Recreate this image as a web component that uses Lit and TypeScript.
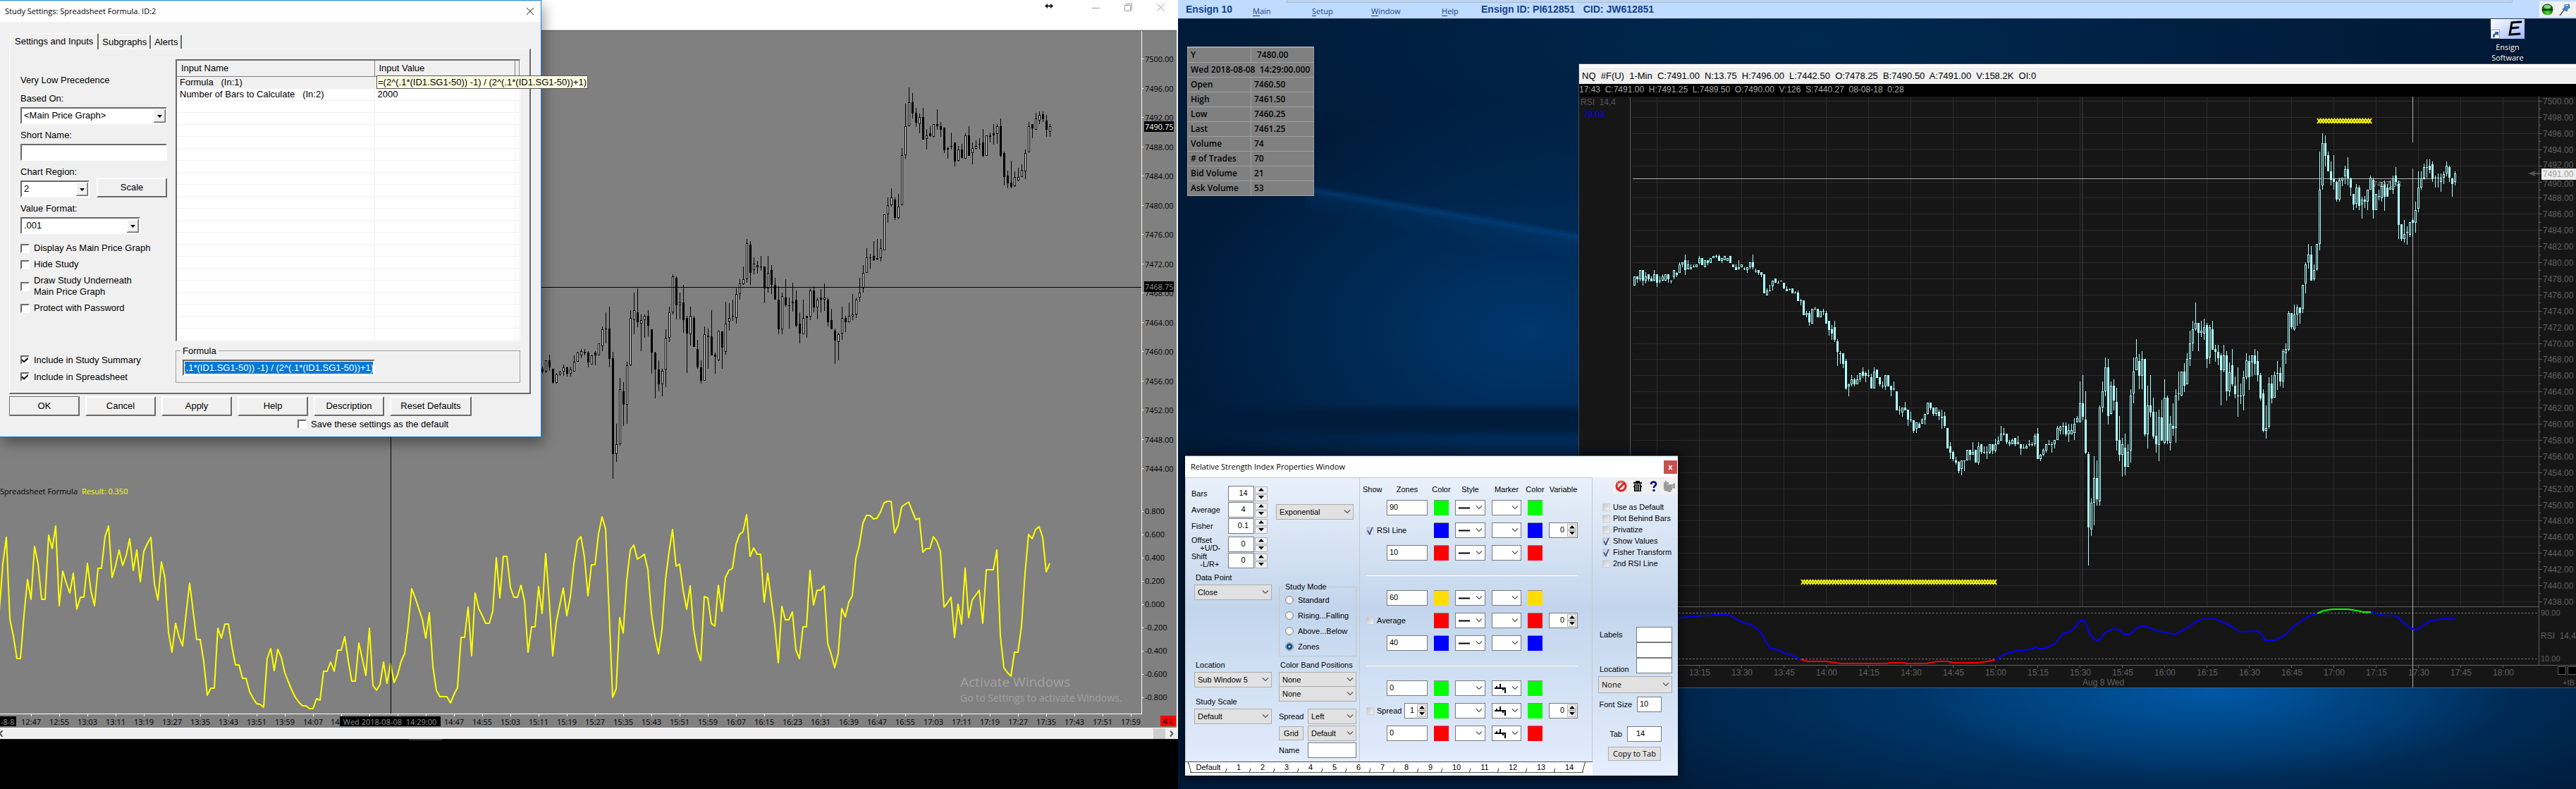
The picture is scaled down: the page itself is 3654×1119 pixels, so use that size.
import { LitElement, html, svg, css, nothing } from "lit";
import { customElement } from "lit/decorators.js";

/* ------------------------------------------------------------------ */
/* Data                                                                */
/* ------------------------------------------------------------------ */

/** One bar: wick top, body top, body bottom, wick bottom, hollow. */
interface Bar { x: number; h: number; t: number; b: number; l: number; up: boolean; }

/** Reads "h t b l w|b" records; positions them `step` apart, the last at `lastX`. */
function bars(src: string, lastX: number, step: number, y: (v: number) => number): Bar[] {
  const rows = src.trim().split(/\s*;\s*/).filter(Boolean);
  return rows.map((r, i) => {
    const p = r.split(",");
    const [h, t, b, l] = p.slice(0, 4).map((v) => Math.round(y(Number(v))));
    return { x: lastX - step * (rows.length - 1 - i), h, t, b: Math.max(b, t + 1), l: Math.max(l, b, t + 1), up: p[4] === "w" };
  });
}

const SC_BARS = bars(`
1165,1172,1180,1187,b;1145,1145,1180,1185,w;1127,1145,1168,1178,b;1172,1172,1216,1218,b;1185,1189,1216,1218,w;1178,1180,1190,1195,w;
1157,1168,1180,1195,w;1165,1168,1187,1197,b;1165,1173,1188,1196,w;1128,1150,1180,1180,w;1118,1121,1150,1150,w;1109,1116,1128,1138,w;
1109,1117,1122,1130,b;1115,1120,1151,1166,b;1127,1128,1157,1158,w;1115,1120,1130,1160,b;1092,1092,1128,1128,w;1038,1045,1099,1115,w;
992,1044,1047,1090,b;974,1044,1140,1166,b;1117,1138,1442,1520,b;1346,1412,1442,1468,w;1201,1237,1412,1415,w;1215,1243,1285,1353,b;
1150,1161,1285,1346,w;986,1010,1161,1163,w;930,986,1016,1062,w;916,993,1024,1040,b;999,1016,1029,1116,w;999,1004,1016,1073,w;
986,1004,1035,1068,b;1045,1045,1121,1188,b;1117,1121,1173,1265,b;1145,1173,1220,1243,b;1172,1178,1220,1258,w;1046,1074,1173,1230,w;
975,993,1074,1087,w;871,877,993,998,w;877,883,971,1014,b;930,960,971,1014,w;905,960,1016,1057,b;1004,1010,1060,1184,b;
974,1004,1062,1097,w;1003,1010,1103,1103,b;1080,1109,1168,1172,b;1145,1168,1209,1218,b;1038,1062,1209,1209,w;1043,1066,1070,1172,b;
986,1069,1130,1130,b;1121,1127,1133,1188,b;1051,1051,1145,1146,w;1052,1052,1104,1172,b;958,1028,1117,1127,w;963,1010,1022,1050,w;
952,1003,1006,1020,w;916,934,1010,1028,w;887,900,934,951,w;847,887,902,905,w;759,773,887,899,w;766,777,866,905,b;
818,837,859,871,w;829,842,848,870,b;813,846,850,860,b;847,847,917,963,b;813,866,916,930,w;842,858,905,935,b;
883,905,952,953,b;910,952,1046,1062,b;930,941,1046,1062,w;887,945,971,974,b;945,969,972,1044,b;899,959,964,990,w;
923,952,1035,1039,b;993,1028,1060,1091,b;952,1010,1062,1062,w;1004,1004,1011,1073,b;916,923,1005,1016,w;910,923,976,993,b;
945,952,976,1015,w;918,945,953,993,b;900,946,952,988,w;945,952,1023,1038,b;982,1016,1046,1046,b;1044,1051,1081,1156,b;
1057,1062,1087,1145,w;974,1010,1060,1080,w;1003,1010,1023,1056,b;960,1004,1023,1023,w;935,1000,1005,1016,w;945,952,1000,1010,w;
883,930,946,958,w;842,866,916,930,w;788,818,866,866,w;806,817,820,853,b;766,813,827,829,b;759,819,825,826,w;
759,789,819,830,w;680,680,796,796,w;627,651,680,708,w;599,627,651,656,w;627,633,692,700,b;616,656,692,697,w;
471,493,651,651,w;329,401,493,504,w;278,325,402,402,w;296,325,360,376,b;343,358,390,404,b;360,372,395,423,w;
343,372,443,444,b;410,430,442,474,w;401,423,432,435,b;395,395,435,436,w;347,394,402,413,b;388,402,413,435,b;
405,405,477,487,b;465,471,476,503,w;422,464,467,476,b;452,452,513,528,b;464,476,511,512,w;457,475,502,505,b;
423,430,504,504,w;401,430,494,494,b;452,471,487,521,w;446,464,472,474,w;440,456,460,475,b;411,452,495,500,b;
430,430,494,494,w;422,430,434,452,b;395,423,430,460,b;394,402,425,458,w;377,401,495,500,b;482,486,563,590,b;
541,557,582,598,b;511,580,594,598,b;545,563,592,594,w;534,562,574,575,w;521,540,562,563,w;476,487,545,569,w;
388,402,483,483,w;394,395,407,440,b;359,377,412,413,w;354,366,383,394,w;354,364,378,388,b;365,383,413,435,b;394,402,419,435,w`,
  1489, 5, (v) => v / 2.24);

const OSC: number[] = [
  800, 600, 485, 835, 905, 1002, 1002, 820, 667, 750, 526, 600, 750, 750, 478, 535, 438, 778, 631, 682, 724, 640, 793, 741, 741,
  596, 715, 778, 618, 618, 482, 438, 658, 605, 541, 605, 565, 493, 628, 541, 676, 546, 512, 485, 685, 754, 592, 660, 890, 976,
  853, 908, 948, 810, 682, 800, 920, 920, 1015, 1159, 1128, 1128, 874, 915, 855, 855, 950, 1028, 1028, 1086, 1086, 1143, 1170,
  1193, 1198, 1210, 1003, 959, 1054, 964, 995, 1062, 1100, 1138, 1168, 1187, 1202, 1204, 1216, 1216, 1172, 1179, 1056, 1056,
  1018, 1056, 966, 966, 910, 1010, 1099, 1099, 937, 1005, 1075, 874, 1117, 1138, 1112, 1018, 1107, 1024, 1104, 1072, 1015, 980,
  860, 704, 745, 790, 835, 915, 808, 1035, 1138, 1164, 1164, 1164, 1191, 1156, 1124, 912, 912, 784, 989, 724, 790, 820, 852,
  852, 800, 574, 745, 568, 568, 700, 741, 741, 691, 755, 976, 867, 867, 697, 810, 556, 750, 991, 850, 775, 703, 818, 740, 600,
  500, 482, 570, 736, 603, 603, 470, 398, 450, 800, 1168, 1130, 828, 895, 670, 540, 520, 578, 569, 557, 625, 810, 910, 982, 880,
  665, 550, 454, 610, 599, 710, 793, 694, 880, 965, 1012, 737, 745, 853, 864, 691, 802, 658, 628, 617, 515, 475, 463, 391, 568,
  532, 558, 558, 763, 640, 750, 860, 1021, 781, 837, 837, 805, 967, 1003, 867, 867, 628, 775, 711, 711, 694, 935, 985, 1042,
  980, 788, 826, 762, 736, 577, 520, 425, 393, 393, 408, 405, 378, 339, 332, 332, 469, 435, 357, 345, 335, 375, 411, 404, 550,
  535, 535, 484, 503, 546, 784, 765, 740, 913, 770, 856, 617, 829, 753, 733, 712, 853, 625, 624, 624, 539, 905, 1040, 1062, 1078,
  975, 975, 865, 640, 475, 493, 454, 440, 487, 634, 598];

const NQ_MORNING = bars(`
815,815,848,848,w;815,816,826,838,b;793,793,825,834,w;793,793,832,850,b;800,816,832,841,w;808,808,825,833,b;814,824,833,833,b;
792,808,832,833,w;808,808,840,855,b;815,832,834,841,b;808,816,832,833,w;808,808,832,833,w;808,808,825,839,b;832,832,833,841,b;
793,793,817,825,w;800,801,809,817,b;763,772,801,801,w;763,763,772,780,w;735,755,793,810,b;755,772,788,788,w;772,780,788,788,w;
770,779,781,781,b;772,772,780,780,w;740,748,765,772,w;747,747,773,773,b;755,755,780,780,w;755,755,766,773,b;747,747,765,765,w;
740,740,748,748,w;733,740,742,748,b;735,740,757,757,b;747,748,757,765,w;740,740,755,756,w;747,747,757,757,w;740,740,766,766,b;
772,772,780,780,b;770,780,793,793,b;755,780,788,788,w;770,772,780,780,w;780,787,789,793,b;780,780,793,801,w;763,763,780,788,w;
735,763,781,788,b;787,794,796,801,b;793,793,801,809,b;800,800,809,817,b;808,808,878,878,b;860,868,885,886,w;847,868,870,870,b;
831,832,853,868,w;824,824,840,840,b;832,840,841,841,b;832,832,834,834,b;840,840,860,861,b;853,862,870,870,b;860,861,863,868,b;
860,860,878,878,b;870,876,878,878,b;868,875,906,907,b;900,905,907,922,b;905,905,959,959,b;944,952,959,967,w;944,951,984,998,b;
936,936,990,990,w;928,936,938,938,b;936,936,967,967,b;944,944,967,967,w;936,943,945,960,b;944,951,990,990,b;980,980,1014,1035,b;
996,1012,1027,1051,b;981,1004,1051,1059,b;1048,1056,1095,1146,b;1092,1100,1103,1140,b;1100,1101,1138,1155,b;1122,1130,1230,1237,b;
1213,1214,1222,1260,w;1182,1198,1214,1222,w;1192,1198,1214,1222,b;1182,1198,1214,1215,w;1173,1174,1198,1208,w;1152,1168,1183,1192,b;
1168,1174,1183,1208,b;1160,1181,1183,1190,b;1175,1190,1230,1230,b;1153,1168,1230,1230,w;1160,1160,1191,1191,b;1190,1190,1214,1222,b;
1205,1220,1222,1230,b;1182,1182,1222,1237,w;1182,1182,1222,1222,b;1220,1220,1236,1260,b;1205,1230,1232,1238,b;1242,1242,1311,1311,b;
1295,1310,1312,1328,b;1302,1302,1319,1334,w;1280,1302,1311,1311,b;1310,1310,1347,1370,b;1318,1346,1348,1355,b;1348,1348,1388,1396,b;
1355,1355,1380,1396,w;1355,1362,1378,1378,b;1340,1347,1362,1362,w;1326,1326,1347,1363,w;1282,1282,1326,1327,w;1282,1282,1304,1312,b;
1302,1302,1326,1333,b;1302,1302,1326,1333,w;1310,1318,1333,1348,b;1310,1334,1341,1380,b;1318,1333,1370,1378,b;1378,1378,1452,1452,b;
1430,1445,1468,1491,b;1460,1467,1491,1500,b;1485,1497,1505,1512,b;1499,1503,1536,1545,b;1498,1498,1528,1552,w;1498,1498,1500,1537,b;
1458,1459,1498,1498,w;1458,1459,1476,1498,b;1430,1466,1476,1476,w;1458,1459,1504,1504,b;1430,1445,1504,1512,w;1437,1438,1467,1475,b;
1445,1467,1469,1475,b;1445,1467,1469,1491,b;1437,1438,1468,1475,w;1437,1438,1460,1475,b;1415,1438,1460,1468,w;1408,1423,1438,1438,w;
1370,1398,1423,1423,w;1378,1397,1399,1407,b;1398,1398,1430,1437,b;1422,1430,1438,1445,w;1415,1422,1438,1438,w;1413,1413,1438,1445,b;
1407,1430,1438,1438,w;1437,1438,1452,1476,b;1437,1450,1452,1452,b;1437,1445,1452,1452,w;1422,1438,1440,1445,b;1430,1438,1440,1445,b;
1398,1406,1438,1445,w;1378,1398,1491,1491,b;1475,1476,1491,1499,w;1452,1458,1476,1482,w;1437,1438,1460,1468,w;1422,1436,1438,1438,b;
1430,1438,1440,1468,b;1422,1422,1438,1452,w;1370,1377,1422,1422,w;1370,1371,1387,1400,w;1355,1370,1371,1400,b;1357,1370,1401,1408,b;
1362,1386,1400,1430,w;1362,1386,1400,1400,w;1340,1362,1395,1422,w;1333,1340,1355,1355,w;1205,1286,1355,1355,w;1182,1286,1334,1348,b;
1242,1346,1468,1475,b`, 2958, 4, (v) => 80 + v * 0.3827);

const NQ_SESSION = bars(`
641,644,748,802,b;707,713,751,760,w;647,678,713,745,w;653,678,708,717,b;575,578,711,717,w;541,555,578,585,w;507,521,555,562,w;
509,521,590,602,b;541,547,587,588,w;538,547,568,582,b;550,570,625,639,b;590,624,645,654,b;621,630,645,676,w;615,635,662,674,b;
630,641,662,662,w;552,561,639,656,w;507,527,558,572,w;481,507,525,525,w;502,512,533,552,b;498,509,533,552,w;509,509,616,619,b;
547,575,616,636,w;532,575,585,591,b;564,584,619,622,b;584,618,630,642,b;581,592,631,654,w;567,592,625,625,b;538,564,628,630,w;
561,564,625,630,b;590,601,628,639,w;572,604,608,618,b;552,561,607,628,w;527,558,559,568,b;527,527,561,562,w;515,527,547,556,b;
501,509,545,545,w;469,487,509,519,w;455,467,487,498,w;429,458,467,469,w;458,458,472,498,b;455,469,472,478,w;452,464,473,482,w;
458,461,509,522,b;461,464,507,516,w;455,467,496,496,b;489,495,499,513,b;489,499,508,518,b;501,504,525,575,b;489,504,525,528,w;
498,504,555,568,b;514,528,555,562,w;495,518,545,548,b;534,547,559,565,b;521,561,562,591,b;544,561,562,573,b;526,535,561,582,w;
501,511,535,538,w;504,512,535,553,b;504,504,514,534,w;495,504,516,532,b;498,512,532,541,b;529,532,565,568,b;552,558,611,613,b;
575,607,611,622,w;535,544,605,608,w;532,544,565,572,b;527,532,564,564,w;512,529,530,553,w;521,529,541,548,b;495,498,541,550,w;
487,495,501,516,w;441,444,496,498,w;444,444,464,467,b;432,446,467,469,w;432,436,446,462,w;436,436,444,459,b;404,404,438,444,w;
372,375,402,416,w;346,361,372,381,w;349,361,398,398,b;375,383,396,398,w;346,346,382,384,w;215,269,346,355,w;189,203,263,269,w;
192,203,221,236,b;215,220,243,243,b;229,243,255,263,b;220,254,258,269,b;256,258,283,286,b;252,255,283,286,w;252,252,256,264,w;
235,240,250,261,w;223,240,253,263,b;252,253,266,278,b;275,275,290,298,b;261,266,289,295,w;263,266,292,298,b;279,283,290,310,w;
278,283,286,295,b;269,269,286,298,w;249,252,269,269,w;252,255,298,310,b;275,275,298,298,w;269,278,279,284,b;258,264,281,286,w;
256,262,279,299,b;261,266,279,279,b;256,266,269,269,w;249,253,269,275,w;237,249,258,263,b;256,261,319,339,b;318,318,339,342,b;
312,332,339,344,w;321,329,330,347,b;315,315,333,336,w;309,312,316,336,b;286,298,316,330,w;243,266,296,301,w;243,253,266,269,w;
232,237,253,255,w;226,237,238,252,b;226,235,241,246,b;229,233,253,258,b;249,252,253,266,b;246,252,253,266,b;246,252,258,272,w;
243,247,252,261,w;229,235,246,250,w;235,237,252,258,b;252,253,261,279,b;243,246,258,263,w`, 3482, 4, (v) => v);

const rsiA = (s: string) => s.split(" ").map((p) => { const [x, y] = p.split(",").map(Number); return `${Math.round(2370 + x * 0.4082)},${Math.round(540 + y / 3)}`; }).join(" ");
const rsiB = (s: string) => s.split(" ").map((p) => { const [x, y] = p.split(",").map(Number); return `${Math.round(2980 + x * 0.4298)},${Math.round(540 + y * 0.3693)}`; }).join(" ");

const RSI_LINES: [string, string][] = [
  ["#00f", rsiA("0,1025 24,1016 35,1009 60,1005 90,1002 100,998 140,998 150,996 200,996 215,1005 235,1021 258,1033 275,1034 295,1050 314,1072 330,1110 345,1136 375,1145 400,1160 425,1171 450,1184")],
  ["#f00", rsiA("450,1184 475,1193 540,1194 590,1202 750,1202 762,1199 810,1199 820,1202 890,1202 925,1193 960,1193 985,1199 1070,1199 1100,1194 1128,1187")],
  ["#00f", rsiA("1128,1187 1158,1165 1200,1149 1230,1145 1258,1139 1266,1131 1276,1139 1298,1139 1333,1121 1362,1076 1385,1067 1408,1048 1422,1021 1432,1020 1442,1033 1451,1065 1462,1090 1480,1106 1490,1100 1510,1070 1535,1056 1545,1056 1568,1069") + " " +
    rsiB("75,971 88,975 98,972 120,948 135,942 160,947 185,961 235,972 250,971 285,951 320,921 340,915 378,915 400,926 430,943 458,965 515,961 530,972 543,996 575,996 605,980 640,940 690,902 714,894")],
  ["#0f0", rsiB("714,894 735,882 765,878 815,878 845,882 865,888 891,889")],
  ["#00f", rsiB("891,889 935,902 973,902 990,921 1015,946 1035,957 1045,955 1070,933 1090,921 1145,913 1150,915 1168,915")],
];

const rect = (x: number, y: number, w: number, h: number) => `M${x} ${y}h${w}v${h}h${-w}z`;
const wicks = (bs: Bar[]) => bs.map((b) => rect(b.x, b.h, 1, b.l - b.h)).join("");
const bodies = (bs: Bar[]) => bs.map((b) => rect(b.x - 1, b.t, 3, b.b - b.t)).join("");
const cores = (bs: Bar[]) => bs.filter((b) => b.up && b.b - b.t > 2).map((b) => rect(b.x, b.t + 1, 1, b.b - b.t - 2)).join("");
const range = (n: number) => Array.from({ length: n }, (_, i) => i);
const clock = (min: number) => `${Math.floor(min / 60)}:${String(min % 60).padStart(2, "0")}`;

/* ------------------------------------------------------------------ */
/* Shared styles                                                       */
/* ------------------------------------------------------------------ */

const base = css`
  * { box-sizing: border-box; }
  button, input, select { font: inherit; color: inherit; margin: 0; border-radius: 0; }
  button { padding: 0; }
  .sel { display: grid; align-items: center; }
  .sel > * { grid-area: 1 / 1; }
  .sel select { appearance: none; width: 100%; height: 100%; padding: 0; outline: none; }
  .sel svg { justify-self: end; pointer-events: none; }
`;

/* ------------------------------------------------------------------ */
/* Grey price chart with the oscillator                                */
/* ------------------------------------------------------------------ */

@customElement("spread-chart")
export class SpreadChart extends LitElement {
  static styles = css`
    :host { display: block; }
    svg { display: block; width: 100%; font: 11px "Open Sans", "Noto Sans", sans-serif; }
    .mid { text-anchor: middle; }
    .crisp { shape-rendering: crispEdges; }
    .big { font-size: 19px; }
    .small { font-size: 14px; }
  `;
  render() {
    return html`<svg viewBox="0 42 1671 990" role="img" aria-label="Price chart">
      <rect x="0" y="42" width="1671" height="990" fill="#808080" />
      <g class="crisp">
        <rect x="0" y="42" width="1671" height="1" fill="#d8d8d8" />
        <rect x="0" y="43" width="1669" height="1" fill="#5f5f5f" />
        <rect x="1669" y="42" width="2" height="990" fill="#f0f0f0" />
        <path d=${wicks(SC_BARS) + bodies(SC_BARS)} fill="#000" />
        <path d=${cores(SC_BARS)} fill="#fff" />
        <rect x="0" y="407" width="1619" height="1" fill="#000" />
        <rect x="1619" y="44" width="1" height="969" fill="#fff" />
        <rect x="0" y="1012" width="1620" height="1" fill="#fff" />
        ${range(15).map((i) => svg`<rect x="1620" y=${Math.round(83 + i * 41.5)} width="2" height="1" fill="#fff"/>`)}
        ${range(9).map((i) => svg`<rect x="1620" y=${725 + i * 33} width="2" height="1" fill="#fff"/>`)}
        ${range(40).map((i) => svg`<rect x=${44 + i * 40} y="1013" width="1" height="3" fill="#fff"/>`)}
      </g>
      <polyline fill="none" stroke="#ff0" stroke-width="2" stroke-linejoin="round"
        points=${OSC.map((v, i) => `${1489 - 5 * (OSC.length - 1 - i)},${Math.round(600 + v / 3)}`).join(" ")} />
      <rect class="crisp" x="554" y="600" width="1" height="412" fill="#000" />
      ${range(15).map((i) => svg`<text x="1624" y=${Math.round(88 + i * 41.5)}>${(7500 - i * 4).toFixed(2)}</text>`)}
      ${range(9).map((i) => svg`<text x="1624" y=${729 + i * 33}>${(0.8 - i * 0.2).toFixed(3).replace("-0.000", "0.000")}</text>`)}
      <rect x="1623" y="172" width="42" height="15" fill="#000" />
      <text x="1624" y="184" fill="#fff">7490.75</text>
      <rect x="1623" y="399" width="42" height="15" fill="#000" />
      <text x="1624" y="411" fill="#909090">7468.75</text>
      ${range(40).filter((i) => i < 11 || i > 14).map((i) => svg`<text class="mid" x=${44 + i * 40} y="1028">${clock(767 + i * 8)}</text>`)}
      <text x="469" y="1028">14</text>
      <rect x="0" y="1016" width="23" height="14" fill="#000" />
      <text x="1" y="1028" fill="#909090">-8-8</text>
      <rect x="482" y="1016" width="143" height="14" fill="#000" />
      <text class="mid" x="553" y="1028" fill="#909090">Wed 2018-08-08&#160; 14:29:00</text>
      <rect x="1646" y="1015" width="22" height="15" fill="#f00" />
      <text class="mid" x="1657" y="1027">4 L</text>
      <text x="0" y="701">Spreadsheet Formula</text>
      <text x="116" y="701" fill="#ff0">Result: 0.350</text>
      <text class="big" x="1362" y="974" fill="#a2a2a2">Activate Windows</text>
      <text class="small" x="1362" y="995" fill="#a2a2a2">Go to Settings to activate Windows.</text>
    </svg>`;
  }
}

/* ------------------------------------------------------------------ */
/* Study settings dialog                                               */
/* ------------------------------------------------------------------ */

const dropArrow = html`<svg class="drop" width="17" height="19" viewBox="0 0 17 19" aria-hidden="true">
  <rect width="17" height="19" fill="#696969" /><rect width="16" height="18" fill="#fff" /><rect x="1" y="1" width="15" height="17" fill="#a0a0a0" /><rect x="1" y="1" width="14" height="16" fill="#f0f0f0" />
  <path d="M5 8h7L8.500 12z" fill="#000" /></svg>`;

@customElement("study-dialog")
export class StudyDialog extends LitElement {
  static styles = [base, css`
    :host { display: block; width: 768px; background: #f0f0f0; border: 1px solid #1883d7; border-left: 0; box-shadow: 3px 8px 18px rgba(0, 0, 0, .4); font: 13px/16px "Liberation Sans", Arial, sans-serif; color: #000; }
    .title { display: flex; align-items: center; justify-content: space-between; height: 30px; padding: 0 9px 0 7px; background: #fff; font: 11px/16px "Open Sans", "Noto Sans", sans-serif; }
    .title button { border: 0; background: none; display: flex; }
    .tabs { display: flex; align-items: flex-end; height: 38px; padding-left: 14px; }
    .tabs button { height: 20px; padding: 0 4px; background: #f0f0f0; border: 1px solid #fff; border-right: 2px solid #696969; border-bottom: 0; border-radius: 2px 2px 0 0; }
    .tabs .on { height: 23px; padding: 0 6px; margin-bottom: -1px; position: relative; }
    .panel { display: grid; grid-template-columns: 208px 489px; column-gap: 12px; margin: 0 14px 0 13px; padding: 14px 0 14px 15px; border: 1px solid #fff; border-right: 2px solid #696969; border-bottom: 2px solid #696969; }
    .left { display: flex; flex-direction: column; gap: 8px; padding-top: 22px; }
    .left > span { padding-bottom: 2px; }
    .field { display: flex; flex-direction: column; gap: 4px; }
    .sunk { border: 2px solid; border-color: #696969 #fff #fff #696969; background: #fff; height: 24px; }
    .sel.sunk select { border: 0; background: #fff; padding-left: 3px; }
    .short { width: 98px; } .mid { width: 170px; }
    .pair { display: flex; justify-content: space-between; align-items: flex-end; height: 24px; }
    .btn { height: 28px; width: 100px; background: #f0f0f0; border: 2px solid; border-color: #fff #696969 #696969 #fff; flex: none; }
    .btn.main { outline: 1px solid #696969; outline-offset: -1px; }
    .btn.wide { width: 116px; }
    .checks { display: flex; flex-direction: column; gap: 7px; padding-top: 4px; }
    .checks.end { margin-top: auto; gap: 8px; }
    label.ck { display: flex; align-items: center; gap: 6px; }
    .ck input { appearance: none; width: 13px; height: 13px; flex: none; display: grid; place-items: center; background: #fff; border: 2px solid; border-color: #696969 #fff #fff #696969; }
    .ck input:checked::before { content: ""; width: 9px; height: 8px; background: #000; clip-path: polygon(0 35%, 35% 65%, 100% 0, 100% 35%, 35% 100%, 0 70%); }
    .right { display: flex; flex-direction: column; gap: 6px; }
    .grid { border: 2px solid; border-color: #696969 #fff #fff #696969; border-bottom-width: 1px; border-right-width: 1px; background: #fff; }
    table { border-collapse: collapse; width: 100%; table-layout: fixed; }
    th, td { padding: 0 0 0 4px; font-weight: 400; text-align: left; line-height: 16px; }
    th { height: 22px; background: #f0f0f0; border-right: 1px solid #808080; border-bottom: 1px solid #808080; padding-left: 6px; }
    td { height: 17px; border-bottom: 1px solid #f0f0f0; border-right: 1px solid #f0f0f0; }
    .c1 { width: 280px; } .c2 { width: 199px; }
    .hot td { background: #f0f0f0; }
    .hot { position: relative; }
    .tip { position: absolute; left: 283px; top: -1px; border: 1px solid #575757; background: #ffffe1; padding: 0 1px; white-space: nowrap; line-height: 17px; }
    fieldset { margin: 0; padding: 0 0 9px 9px; border: 1px solid #a0a0a0; min-width: 0; }
    legend { padding: 0 3px; margin-left: -3px; line-height: 16px; }
    .formula { display: block; width: 273px; height: 23px; margin-top: 4px; padding: 0; overflow: hidden; background: #0078d7; color: #fff; border: 2px solid; border-color: #696969 #fff #fff #696969; outline: 1px solid #fff; outline-offset: -3px; }
    .foot { display: flex; gap: 8px; padding: 3px 0 0 13px; }
    .save { display: flex; padding: 4px 0 9px 422px; }
  `];
  private check(text: unknown, on = false) {
    return html`<label class="ck"><input type="checkbox" ?checked=${on} /><span>${text}</span></label>`;
  }
  private drop(id: string, label: string, value: string, cls: string) {
    return html`<div class="sel sunk ${cls}"><select id=${id} aria-label=${label}><option>${value}</option></select>${dropArrow}</div>`;
  }
  firstUpdated() {
    const f = this.renderRoot.querySelector(".formula") as HTMLInputElement;
    f.scrollLeft = f.scrollWidth;
  }
  render() {
    return html`
      <div class="title"><span>Study Settings: Spreadsheet Formula. ID:2</span>
        <button aria-label="Close"><svg width="12" height="12" viewBox="0 0 12 12"><path d="M1 1l10 10M11 1L1 11" stroke="#222" fill="none" /></svg></button></div>
      <div class="tabs"><button class="on">Settings and Inputs</button><button>Subgraphs</button><button>Alerts</button></div>
      <div class="panel">
        <div class="left">
          <span>Very Low Precedence</span>
          <div class="field"><label for="based">Based On:</label>${this.drop("based", "Based On", "<Main Price Graph>", "")}</div>
          <div class="field"><label for="short">Short Name:</label><input id="short" class="sunk" /></div>
          <div class="field"><label for="region">Chart Region:</label><div class="pair">${this.drop("region", "Chart Region", "2", "short")}<button class="btn">Scale</button></div></div>
          <div class="field"><label for="fmt">Value Format:</label>${this.drop("fmt", "Value Format", ".001", "mid")}</div>
          <div class="checks">${this.check("Display As Main Price Graph")}${this.check("Hide Study")}${this.check(html`Draw Study Underneath<br />Main Price Graph`)}${this.check("Protect with Password")}</div>
          <div class="checks end">${this.check("Include in Study Summary", true)}${this.check("Include in Spreadsheet", true)}</div>
        </div>
        <div class="right">
          <div class="grid"><table>
            <colgroup><col class="c1" /><col class="c2" /><col /></colgroup>
            <thead><tr><th>Input Name</th><th>Input Value</th><th></th></tr></thead>
            <tbody>
              <tr class="hot"><td>Formula&#160;&#160; (In:1)</td><td><span class="tip">=(2^(.1*(ID1.SG1-50)) -1) / (2^(.1*(ID1.SG1-50))+1)</span></td><td></td></tr>
              <tr><td>Number of Bars to Calculate&#160;&#160; (In:2)</td><td>2000</td><td></td></tr>
              ${range(20).map(() => html`<tr><td></td><td></td><td></td></tr>`)}
            </tbody></table></div>
          <fieldset><legend>Formula</legend><input class="formula" aria-label="Formula" .value=${"=(2^(.1*(ID1.SG1-50)) -1) / (2^(.1*(ID1.SG1-50))+1)"} /></fieldset>
        </div>
      </div>
      <div class="foot"><button class="btn main">OK</button><button class="btn">Cancel</button><button class="btn">Apply</button><button class="btn">Help</button><button class="btn">Description</button><button class="btn wide">Reset Defaults</button></div>
      <div class="save">${this.check("Save these settings as the default")}</div>`;
  }
}

/* ------------------------------------------------------------------ */
/* Dark NQ chart window                                                */
/* ------------------------------------------------------------------ */

@customElement("nq-chart")
export class NqChart extends LitElement {
  static styles = [base, css`
    :host { display: flex; flex-direction: column; border-top: 1px solid #3a4a5e; border-left: 1px solid #3a4a5e; border-bottom: 1px solid #3c5a7c; background: #161616; font: 12px/18px "Liberation Sans", Arial, sans-serif; overflow: hidden; }
    .head { background: #f0f0f0; border-top: 5px solid #fff; height: 28px; padding-left: 4px; white-space: nowrap; color: #000; font-size: 13px; line-height: 24px; }
    .quote { background: #000; color: #a8a8a8; height: 18px; line-height: 16px; white-space: nowrap; }
    svg { display: block; width: 100%; }
    .crisp { shape-rendering: crispEdges; }
    .mid { text-anchor: middle; }
    .axis { fill: #606060; }
    .tiny { font-size: 11px; }
  `];
  render() {
    const all = [...NQ_MORNING, ...NQ_SESSION];
    const gy = (k: number) => Math.round(143 + k * 22.9);
    const cross = (x0: number, n: number, y: number) => range(n).map((i) => `M${x0 + i * 4} ${y}l5 7m0-7l-5 7`).join("");
    return html`
      <div class="head">NQ&#160; #F(U)&#160; 1-Min&#160; C:7491.00&#160; N:13.75&#160; H:7496.00&#160; L:7442.50&#160; O:7478.25&#160; B:7490.50&#160; A:7491.00&#160; V:158.2K&#160; OI:0</div>
      <div class="quote">17:43&#160; C:7491.00&#160; H:7491.25&#160; L:7489.50&#160; O:7490.00&#160; V:126&#160; S:7440.27&#160; 08-08-18&#160; 0:28</div>
      <svg viewBox="2240 137 1414 838" role="img" aria-label="NQ one minute chart">
        <g class="crisp" fill="#2b2b2b">
          ${range(32).map((k) => svg`<rect x="2316" y=${gy(k)} width="1285" height="1"/>`)}
          ${range(21).map((k) => svg`<rect x=${2350 + k * 60} y="138" width="1" height="723"/>`)}
          <rect x="2953" y="138" width="2" height="723" fill="#2b2b2b" />
        </g>
        <g class="crisp" fill="#606060">
          <rect x="2312" y="138" width="1" height="722" />
          <rect x="3601" y="137" width="1" height="806" />
          <rect x="2240" y="860" width="1361" height="1" />
          <rect x="2240" y="943" width="1414" height="1" />
          ${range(63).map((k) => svg`<rect x="3602" y=${Math.round(143 + k * 11.45)} width=${k % 2 ? 2 : 4} height="1"/>`)}
          ${range(21).map((k) => svg`<rect x=${2350 + k * 60} y="944" width="1" height="3"/>`)}
        </g>
        <path class="crisp" d="M2316 869.500H3601M2316 934.500H3601" stroke="#6a6a6a" stroke-dasharray="3 2" fill="none" />
        <g class="crisp" fill="#b0b0b0">
          <rect x="2316" y="253" width="1136" height="1" />
          <rect x="3422" y="137" width="1" height="65" />
          <rect x="3422" y="239" width="1" height="736" />
        </g>
        <text class="tiny" x="3366" y="265" fill="#8a8a8a">7497.58</text>
        <path class="crisp" d=${wicks(all) + bodies(all)} fill="#afffff" />
        <path class="crisp" d=${cores(all)} fill="#161616" />
        <path d=${cross(2555, 69, 822) + cross(3287, 19, 168)} stroke="#ff0" stroke-width="2" fill="none" />
        ${RSI_LINES.map(([c, pts]) => svg`<polyline points=${pts} fill="none" stroke=${c} stroke-width="2"/>`)}
        <text x="2242" y="149" fill="#555">RSI&#160; 14,4</text>
        <text x="2246" y="166" fill="#00f">79.03</text>
        <g class="axis">
          ${range(32).filter((k) => k !== 4 && k !== 5).map((k) => svg`<text x="3607" y=${gy(k) + 5}>${(7500 - k * 2).toFixed(2)}</text>`)}
          <text x="3607" y="238">7492.00</text>
          <text x="3607" y="265">7490.00</text>
          ${range(20).map((k) => svg`<text class="mid" x=${2411 + k * 60} y="958">${clock(795 + k * 15)}</text>`)}
          <text x="2954" y="972">Aug 8 Wed</text>
          <text class="tiny" x="3604" y="873">90.00</text>
          <text class="tiny" x="3604" y="938">10.00</text>
          <text x="3604" y="906">RSI&#160; 14,4</text>
          <text class="tiny" x="3635" y="972">+IB</text>
        </g>
        <rect x="3605" y="239" width="49" height="16" fill="#eee" />
        <text x="3607" y="251" fill="#a0a0a0">7491.00</text>
        <path d="M3586 246l11-4-2 3h8v2h-8l2 3z" fill="#555" />
        <g fill="#000" stroke="#5c5c5c"><rect x="3628.500" y="945.500" width="11" height="11" /><rect x="3642.500" y="945.500" width="12" height="11" /></g>
      </svg>`;
  }
}

/* ------------------------------------------------------------------ */
/* RSI properties window                                               */
/* ------------------------------------------------------------------ */

const chevron = html`<svg width="17" height="8" viewBox="0 0 17 8" aria-hidden="true"><path d="M4 1.500l4 4 4-4" fill="none" stroke="#555" stroke-width="1.200" /></svg>`;

@customElement("rsi-window")
export class RsiWindow extends LitElement {
  static styles = [base, css`
    :host { display: block; width: 699px; border-top: 1px solid #1883d7; background: #fff; box-shadow: 0 0 14px 3px rgba(0, 0, 0, .6); font: 11px/12px "Liberation Sans", Arial, sans-serif; color: #000; }
    .title { display: flex; align-items: center; justify-content: space-between; height: 30px; padding: 0 1px 0 8px; font: 11px/16px "Open Sans", "Noto Sans", sans-serif; }
    .close { width: 19px; height: 19px; border: 0; background: #c75050; color: #fff; font: bold 10px/16px "Open Sans", sans-serif; }
    .body { display: grid; grid-template-columns: 248px 330px 1fr; grid-template-rows: 403px 20px; background: linear-gradient(#e9f1fb, #c3d5ec 44%, #c6d8ee 50%, #e4eefe); }
    .a, .b { border: 1px solid #c4c8cc; border-left-width: 0; border-bottom: 0; }
    .a { grid-area: 1 / 1; padding: 11px 0 0 8px; border-left-width: 1px; }
    .b { grid-area: 1 / 2; padding: 10px 8px 0 9px; }
    .sel select { background: #e1e1e1; border: 1px solid #adadad; height: 22px; padding-left: 4px; }
    .sel { width: 110px; height: 22px; }
    .sel.seg { font: 11px/14px "Open Sans", sans-serif; }
    .box { border: 1px solid #7a7a7a; background: #fff; height: 22px; padding: 0 3px 3px; }
    .top { display: flex; gap: 12px; }
    .top .sel { margin-top: 26px; }
    .params { display: grid; grid-template-columns: 52px 37px 19px; row-gap: 1px; align-items: center; }
    .params .box { text-align: center; width: 37px; padding: 0 0 2px 6px; }
    .params label { line-height: 11px; white-space: pre; }
    .params .low { margin-top: 3px; }
    .spin { display: flex; flex-direction: column; gap: 1px; margin-left: 1px; }
    .spin button { height: 10px; width: 18px; border: 1px solid #b4b4b4; background: #f0f0f0; display: grid; place-items: center; }
    .two { display: grid; grid-template-columns: 110px 110px; column-gap: 10px; padding: 7px 0 0 4px; grid-template-rows: 118px auto; row-gap: 6px; }
    .stack { display: flex; flex-direction: column; gap: 4px; align-items: flex-start; white-space: nowrap; }
    .stack .gap { margin-top: 10px; }
    .stack > span { padding-left: 2px; }
    .flush { margin-top: -6px; }
    fieldset { margin: 13px 0 0; padding: 5px 0 0 8px; border: 1px solid #c4c4c4; min-width: 0; display: flex; flex-direction: column; gap: 6px; }
    legend { padding: 0 2px; margin-left: -2px; line-height: 12px; }
    .opt { display: flex; align-items: center; gap: 6px; height: 16px; }
    input[type="radio"] { appearance: none; width: 12px; height: 12px; flex: none; border-radius: 50%; border: 1px solid #8c8c8c; background: radial-gradient(#fff 20%, #cfcfcf); }
    input[type="radio"]:checked { background: radial-gradient(circle at 50% 50%, #9fdcff 0 1px, #0c4f86 2px 4px, #eef 5px); }
    input[type="checkbox"] { appearance: none; width: 11px; height: 11px; flex: none; border: 1px solid #fff; background: linear-gradient(135deg, #c0c5cc, #f6f6f6); outline: 1px solid #cfcfcf; outline-offset: -1px; display: grid; place-items: center; }
    input[type="checkbox"]:checked::before { content: ""; width: 9px; height: 11px; background: #3d5aa8; clip-path: polygon(0 45%, 20% 40%, 40% 70%, 80% 0, 100% 0, 50% 100%, 35% 100%); }
    .rows { display: flex; flex-direction: column; gap: 2px; }
    .line { display: flex; align-items: center; justify-content: space-between; width: 110px; }
    .rows .gap { margin-top: 6px; }
    .line .sel { width: 69px; } .line .box { width: 69px; }
    .b2 { border: 1px solid #adadad; background: #e1e1e1; height: 20px; padding: 0; }
    .b2.grid { width: 35px; }
    .zones { display: grid; grid-template-columns: 20px 58px 21px 43px 42px 21px 41px; column-gap: 9px; grid-template-rows: 16px; grid-auto-rows: 32px; align-items: center; }
    .zones .hd { justify-self: center; align-self: start; white-space: nowrap; }
    .zones .show { justify-self: start; align-self: start; margin-left: -5px; }
    .zones .z { grid-column: 2; width: 58px; }
    .zones .ck { grid-column: 1 / 3; display: flex; align-items: center; gap: 4px; }
    .zones .none { grid-column: 7; }
    .zones .rule { grid-column: 1 / -1; height: 2px; background: #fff; border-top: 1px solid #d8d8d8; }
    .sw { height: 22px; border: 0; border-top: 1px solid #888; width: 21px; }
    .zones .sel { width: 100%; }
    .zones .sel select { background: #fff; border-color: #7a7a7a; }
    .zones .sel .ic { justify-self: start; margin-left: 4px; }
    .var { display: flex; align-items: center; border: 1px solid #7a7a7a; background: #fff; height: 22px; padding-right: 1px; }
    .var input { width: 100%; min-width: 0; border: 0; background: none; text-align: right; padding: 0 4px 2px 0; outline: none; }
    .var .spin { margin: 0; gap: 0; } .var .spin button { width: 13px; height: 9px; }
    .ck .var { width: 35px; margin-left: auto; }
    .c { grid-area: 1 / 3 / 3 / 4; display: flex; flex-direction: column; border-top: 1px solid #e9eff6; padding-left: 8px; }
    .tools { display: flex; align-self: flex-end; width: 92px; height: 23px; background: #f0f0f0; align-items: center; justify-content: space-around; }
    .tools button { border: 0; background: none; width: 20px; height: 20px; display: grid; place-items: center; }
    .list { display: flex; flex-direction: column; padding: 10px 0 0 6px; height: 172px; }
    .list label { display: flex; align-items: center; gap: 4px; height: 16px; white-space: nowrap; }
    .tags { display: grid; grid-template-columns: 1fr 51px; padding: 16px 8px 0 2px; }
    .tags .box { width: 51px; grid-column: 2; }
    .tags label { grid-column: 1; grid-row: 1; align-self: center; } .tags .loc { grid-row: 3; align-self: end; }
    .c .sel { width: 105px; height: 24px; margin-top: 4px; }
    .c .sel select { height: 24px; }
    .fs { display: flex; justify-content: flex-end; align-items: center; gap: 7px; padding: 5px 23px 0 0; }
    .fs.tab { padding-top: 20px; } .fs.tab .box { width: 49px; padding-left: 12px; } .fs .box { width: 35px; }
    .copy { align-self: flex-start; margin: 7px 0 0 14px; width: 75px; white-space: nowrap; font: 11px/14px "Open Sans", sans-serif; }
    .strip { grid-area: 2 / 1 / 3 / 3; display: flex; padding-left: 7px; background: #fafafa; border-top: 1px solid #555; }
    .strip button { position: relative; width: 34px; height: 15px; border: 0; border-bottom: 1px solid #555; background: #fff; line-height: 12px; }
    .strip button::after { content: ""; position: absolute; right: -1px; top: 0; height: 14px; border-right: 1px solid #333; transform: skewX(-16deg); }
    .strip .first { width: 52px; } .strip .wide { width: 40px; }
    .strip .first::before { content: ""; position: absolute; left: -1px; top: 0; height: 14px; border-left: 1px solid #333; transform: skewX(16deg); }
  `];
  private tri(up: boolean) {
    return html`<svg width="8" height="5" viewBox="0 0 8 5"><path d=${up ? "M4 0l4 4.500H0z" : "M4 4.500l4-4.500H0z"} fill="#000" /></svg>`;
  }
  private spin(cls = "") {
    return html`<div class="spin ${cls}"><button aria-label="Up">${this.tri(true)}</button><button aria-label="Down">${this.tri(false)}</button></div>`;
  }
  private drop(label: string, value: string, cls = "", icon: unknown = nothing) {
    return html`<div class="sel ${cls}"><select aria-label=${label}><option>${value}</option></select>${icon}${chevron}</div>`;
  }
  private param(id: string, label: string, value: string, low = false) {
    const cls = low ? "low" : "";
    return html`<label for=${id} class=${cls}>${label}</label><input id=${id} class="box ${cls}" .value=${value} />${this.spin(cls)}`;
  }
  private zone(first: unknown, color: string, last: "line" | "step", variable = false) {
    const dash = html`<svg class="ic" width="17" height="3" viewBox="0 0 17 3"><path d="M1 1.500h16" stroke="#000" stroke-width="2" /></svg>`;
    const step = html`<svg class="ic" width="17" height="14" viewBox="0 0 17 14"><path d="M0 7h9M3 7V4M8 8V1M8 7h8M12 7v3M15 6v8" stroke="#000" stroke-width="2" fill="none" /></svg>`;
    return html`${first}
      <button class="sw" aria-label="Color" style="background:${color}"></button>
      ${this.drop("Style", "", "", last === "line" ? dash : nothing)}
      ${this.drop("Marker", "", "", last === "step" ? step : nothing)}
      <button class="sw" aria-label="Marker color" style="background:${color}"></button>
      ${variable ? html`<div class="var"><input aria-label="Variable" .value=${"0"} />${this.spin()}</div>` : html`<span class="none"></span>`}`;
  }
  private z(v: string) { return html`<input class="box z" aria-label="Zone" .value=${v} />`; }
  private ck(text: string, on = false) {
    return html`<label><input type="checkbox" ?checked=${on} />${text}</label>`;
  }
  render() {
    return html`
      <div class="title"><span>Relative Strength Index Properties Window</span><button class="close">x</button></div>
      <div class="body">
        <div class="a">
          <div class="top">
            <div class="params">
              ${this.param("p1", "Bars", "14")}${this.param("p2", "Average", "4")}${this.param("p3", "Fisher", "0.1")}
              ${this.param("p4", "Offset\n    +U/D-", "0", true)}${this.param("p5", "Shift\n    -L/R+", "0")}
            </div>
            ${this.drop("Average type", "Exponential")}
          </div>
          <div class="two">
            <div class="stack"><span>Data Point</span>${this.drop("Data Point", "Close")}</div>
            <fieldset><legend>Study Mode</legend>
              ${["Standard", "Rising...Falling", "Above...Below", "Zones"].map((t, i) => html`<label class="opt"><input type="radio" name="mode" ?checked=${i === 3} />${t}</label>`)}
            </fieldset>
            <div class="stack"><span>Location</span>${this.drop("Location", "Sub Window  5")}<span class="gap">Study Scale</span>${this.drop("Study Scale", "Default")}</div>
            <div class="stack"><span>Color Band Positions</span>${this.drop("Band one", "None")}<div class="flush">${this.drop("Band two", "None")}</div>
              <div class="rows">
                <div class="line gap"><span>Spread</span>${this.drop("Spread", "Left")}</div>
                <div class="line"><button class="b2 grid">Grid</button>${this.drop("Grid", "Default")}</div>
                <div class="line"><label for="nm">Name</label><input id="nm" class="box" /></div>
              </div>
            </div>
          </div>
        </div>
        <div class="b"><div class="zones">
          <span class="show">Show</span>${["Zones", "Color", "Style", "Marker", "Color", "Variable"].map((t) => html`<span class="hd">${t}</span>`)}
          ${this.zone(this.z("90"), "#0f0", "line")}
          ${this.zone(html`<label class="ck"><input type="checkbox" checked />RSI Line</label>`, "#00f", "line", true)}
          ${this.zone(this.z("10"), "#f00", "line")}
          <div class="rule"></div>
          ${this.zone(this.z("60"), "#fd0", "line")}
          ${this.zone(html`<label class="ck"><input type="checkbox" />Average</label>`, "#f00", "line", true)}
          ${this.zone(this.z("40"), "#00f", "line")}
          <div class="rule"></div>
          ${this.zone(this.z("0"), "#0f0", "step")}
          ${this.zone(html`<div class="ck"><input id="sp" type="checkbox" /><label for="sp">Spread</label><div class="var"><input aria-label="Spread size" .value=${"1"} />${this.spin()}</div></div>`, "#0f0", "step", true)}
          ${this.zone(this.z("0"), "#f00", "step")}
        </div></div>
        <div class="c">
          <div class="tools">
            <button aria-label="Disable"><svg width="17" height="17" viewBox="0 0 17 17"><circle cx="8.500" cy="8.500" r="6.500" fill="#fbe9e7" stroke="#d42a2a" stroke-width="3" /><path d="M4 13L13 4" stroke="#d42a2a" stroke-width="3" /><path d="M3 6a6 6 0 0 1 10-3" stroke="#f08a80" fill="none" /></svg></button>
            <button aria-label="Delete"><svg width="14" height="17" viewBox="0 0 14 17"><path d="M4 1h6v2h3v2H1V3h3zM2 6h10v2h1v2h-1v6H2v-6H1V8h1z" fill="#000" /><path d="M4.500 7v8M7 7v8M9.500 7v8" stroke="#ddd" /></svg></button>
            <button aria-label="Help"><svg width="11" height="15" viewBox="0 0 11 15"><path d="M2 5Q2 1.500 5.500 1.500T9 4.500Q9 6.500 6.800 7.500Q6 8 6 10" fill="none" stroke="#00007f" stroke-width="2.600" /><rect x="4.500" y="12" width="3" height="3" fill="#00007f" /></svg></button>
            <button aria-label="Record"><svg width="17" height="16" viewBox="0 0 17 16"><path d="M0 2h2V0h2v2h3v3h5l4-2v8l-4-1v3h-2l1 2-3 1-3-1-4-1-1-4z" fill="#9a9a9a" /><path d="M5 4l2 2M11 9l3-2" stroke="#e6e6e6" /></svg></button>
          </div>
          <div class="list">${this.ck("Use as Default")}${this.ck("Plot Behind Bars")}${this.ck("Privatize")}${this.ck("Show Values", true)}${this.ck("Fisher Transform", true)}${this.ck("2nd RSI Line")}</div>
          <div class="tags"><label for="l1">Labels</label><input id="l1" class="box" /><input class="box" aria-label="Label two" /><input class="box" aria-label="Label three" /><label class="loc" for="l4">Location</label></div>
          <div class="sel seg"><select id="l4"><option>None</option></select>${chevron}</div>
          <div class="fs"><label for="f1">Font Size</label><input id="f1" class="box" .value=${"10"} /></div>
          <div class="fs tab"><label for="t1">Tab</label><input id="t1" class="box" .value=${"14"} /></div>
          <button class="b2 copy">Copy to Tab</button>
        </div>
        <div class="strip"><button class="first">Default</button>${range(14).map((i) => html`<button class=${i > 8 ? "wide" : ""}>${i + 1}</button>`)}</div>
      </div>`;
  }
}

/* ------------------------------------------------------------------ */
/* Desktop                                                             */
/* ------------------------------------------------------------------ */

const READOUT: [string, string][] = [["Open", "7460.50"], ["High", "7461.50"], ["Low", "7460.25"], ["Last", "7461.25"], ["Volume", "74"], ["# of Trades", "70"], ["Bid Volume", "21"], ["Ask Volume", "53"]];

@customElement("app-root")
export class AppRoot extends LitElement {
  static styles = [base, css`
    :host { display: block; }
    .desk { display: grid; grid-template-columns: 1671fr 1983fr; min-height: 100vh; overflow: hidden; font: 12px/16px "Open Sans", "Noto Sans", sans-serif; }
    .first { position: relative; background: #000; display: flex; flex-direction: column; }
    .bar { height: 42px; background: #fff; display: flex; justify-content: flex-end; align-items: flex-start; gap: 34px; padding: 4px 19px 0 0; }
    .bar button { border: 0; background: none; width: 12px; height: 12px; display: grid; place-items: center; }
    .bar .move { margin-right: 20px; }
    .scroll { height: 16px; background: #f0f0f0; border-top: 1px solid #fff; display: flex; align-items: center; padding-right: 6px; }
    .scroll .track { flex: 1; }
    .scroll .thumb { width: 17px; height: 16px; background: #cdcdcd; margin-right: 6px; }
    .task { height: 2px; background: #0d0d0d; display: flex; padding-left: 580px; }
    .task i { width: 47px; background: #3a3a3a; }
    .second { position: relative; overflow: hidden; background:
      radial-gradient(420px 130px at 1470px 978px, #0058a6 0, rgba(0, 80, 150, .6) 45%, transparent 100%),
      radial-gradient(900px 200px at 1360px 990px, rgba(0, 72, 136, .9), transparent 100%),
      linear-gradient(transparent 572px, #001c3c 584px 606px, transparent 620px) 0 0 / 568px 700px no-repeat,
      linear-gradient(190deg, transparent 46%, rgba(0, 84, 160, .4) 49%, rgba(0, 70, 130, .2) 52%, transparent 62%) 180px 205px / 388px 200px no-repeat,
      radial-gradient(520px 330px at 500px 470px, #00376d, transparent 100%),
      radial-gradient(900px 260px at 900px 60px, #002950, transparent 100%),
      #001a38; }
    .menu { height: 27px; background: #bfdbff; border-bottom: 1px solid #2b3e58; display: flex; align-items: center; color: #15428b; padding-left: 11px; white-space: nowrap; }
    .menu b { font: bold 14px/20px "Liberation Sans", Arial, sans-serif; }
    .menu .app { width: 95px; }
    .menu a { color: inherit; text-decoration: none; width: 84px; padding-top: 5px; font-size: 11px; }
    .menu a u { text-underline-offset: 2px; }
    .menu .wide { width: 100px; } .menu .last { width: 56px; }
    .menu .strip { align-self: flex-start; position: absolute; left: 154px; right: 90px; height: 4px; background: #bfd3ec; border: 1px solid #9fbce0; border-top: 0; }
    .menu .pins { margin-left: auto; display: flex; align-items: center; gap: 8px; background: #f0f0f0; height: 22px; width: 52px; padding: 1px 0 0 3px; overflow: hidden; }
    .menu .pins svg { flex: none; }
    .readout { position: absolute; left: 13px; top: 66px; width: 180px; background: #808080; border: 1px solid #a8a8a8; border-right-color: #fff; border-bottom-color: #fff; border-top-width: 2px; border-collapse: collapse; table-layout: fixed; font: 600 12px/18px "Open Sans", "Noto Sans", sans-serif; color: #000; }
    .readout td, .readout th { height: 21px; padding: 1px 0 0 4px; border: 1px solid #a0a0a0; text-align: left; font-weight: inherit; white-space: nowrap; }
    .readout .k { width: 90px; } .readout .y { padding-left: 8px; }
    .icon { position: absolute; left: 1862px; top: 27px; width: 48px; display: flex; flex-direction: column; align-items: center; color: #fff; text-align: center; font-size: 11px; line-height: 15px; text-shadow: 1px 1px 2px #000; text-decoration: none; gap: 4px; }
    .chart { position: absolute; left: 568px; right: 0; top: 90px; }
    .props { position: absolute; left: 10px; top: 646px; }
    .study { position: absolute; left: 0; top: 0; }
  `];
  render() {
    return html`<main class="desk">
      <section class="first">
        <div class="bar">
          <svg class="move" width="12" height="9" viewBox="0 0 12 9"><path d="M0 4.500L4 1v2.500h4V1l4 3.500L8 8V5.500H4V8z" fill="#111" /></svg>
          <button aria-label="Minimize"><svg width="11" height="11" viewBox="0 0 11 11"><path d="M0 6.500h11" stroke="#999" /></svg></button>
          <button aria-label="Restore"><svg width="11" height="11" viewBox="0 0 11 11"><path d="M.5 2.500h8v8h-8zM2.500 2.500v-2h8v8h-2" fill="none" stroke="#999" /></svg></button>
          <button aria-label="Close"><svg width="11" height="11" viewBox="0 0 11 11"><path d="M.5.5l10 10M10.500.5l-10 10" stroke="#999" /></svg></button>
        </div>
        <spread-chart></spread-chart>
        <div class="scroll">
          <svg width="5" height="9" viewBox="0 0 5 9"><path d="M3.500 0L0 4.500l3.500 4.500" stroke="#555" stroke-width="2" fill="none" /></svg>
          <span class="track"></span><span class="thumb"></span>
          <svg width="6" height="9" viewBox="0 0 6 9"><path d="M1 .5l3.500 4L1 8.500" stroke="#555" stroke-width="2" fill="none" /></svg>
        </div>
        <div class="task"><i></i></div>
        <study-dialog class="study"></study-dialog>
      </section>
      <section class="second">
        <nav class="menu">
          <span class="strip"></span>
          <b class="app">Ensign 10</b>
          <a href="#main"><u>M</u>ain</a><a href="#setup"><u>S</u>etup</a><a href="#window" class="wide"><u>W</u>indow</a><a href="#help" class="last"><u>H</u>elp</a>
          <b>Ensign ID: PI612851&#160;&#160; CID: JW612851</b>
          <span class="pins">
            <svg width="17" height="17" viewBox="0 0 17 17"><defs><radialGradient id="g" cx=".5" cy=".8" r=".8"><stop offset="0" stop-color="#5fe03a" /><stop offset=".6" stop-color="#0a6a0a" /><stop offset="1" stop-color="#053805" /></radialGradient></defs><circle cx="8.500" cy="8.500" r="8" fill="url(#g)" /><ellipse cx="8.500" cy="4.500" rx="5" ry="2.800" fill="#8fce88" /><path d="M1 9h15" stroke="#064706" stroke-width="2" /></svg>
            <svg width="16" height="18" viewBox="0 0 16 18"><path d="M1 17L7 9" stroke="#555" stroke-width="1.500" /><path d="M8 2l6-1 1 5-3 1-1 4-6-3 3-2z" fill="#3f8fd2" stroke="#23609c" /><path d="M9 3l4-1" stroke="#cfe6fa" stroke-width="1.500" /></svg>
            <svg width="8" height="18" viewBox="0 0 8 18"><path d="M7 11.500H.5v3H7" stroke="#666" fill="none" /></svg>
          </span>
        </nav>
        <table class="readout">
          <tbody>
            <tr><th class="k">Y</th><td class="y">7480.00</td></tr>
            <tr><td colspan="2">Wed 2018-08-08&#160; 14:29:00.000</td></tr>
            ${READOUT.map(([k, v]) => html`<tr><th>${k}</th><td>${v}</td></tr>`)}
          </tbody>
        </table>
        <a class="icon" href="#ensign">
          <svg width="48" height="28" viewBox="0 0 48 28"><defs><linearGradient id="w" x2="1" y2="1"><stop offset="0" stop-color="#fff" /><stop offset="1" stop-color="#9db8ff" /></linearGradient></defs><rect width="48" height="28" fill="url(#w)" /><path d="M43 4L30 5 27 22 41 21M29 13l10-1" stroke="#000" stroke-width="3" fill="none" stroke-linecap="round" /><rect x=".5" y="15.500" width="12" height="12" fill="#fff" stroke="#999" /><path d="M3 26q-1-6 4-6l-2-2h6v6l-2-2q-4 0-3 4z" fill="#2f5f9f" /></svg>
          <span>Ensign<br />Software</span>
        </a>
        <nq-chart class="chart"></nq-chart>
        <rsi-window class="props"></rsi-window>
      </section>
    </main>`;
  }
}
